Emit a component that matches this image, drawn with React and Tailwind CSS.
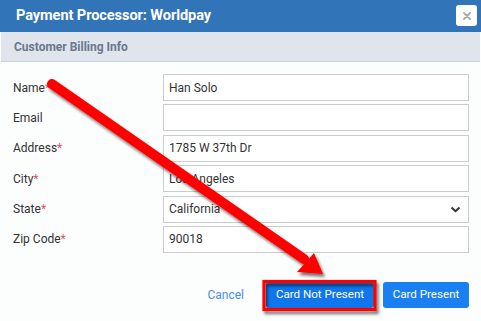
import React from "react";

const rows = [
  { label: "Name", req: true, value: "Han Solo" },
  { label: "Email", req: false, value: "" },
  { label: "Address", req: true, value: "1785 W 37th Dr" },
  { label: "City", req: true, value: "Los Angeles" },
  { label: "State", req: true, value: "California", select: true },
  { label: "Zip Code", req: true, value: "90018" },
];

export default function App() {
  return (
    <div
      className="relative w-[481px] h-[321px] overflow-hidden bg-[#fcfdfd] text-[#333]"
      style={{ fontFamily: "Roboto, 'Liberation Sans', sans-serif" }}
    >
      <div className="h-[32px] bg-[#3174b8] flex items-center justify-between pl-[16px] pr-[4px]">
        <span className="text-white font-bold text-[14.6px] tracking-[-0.1px]">Payment Processor: Worldpay</span>
        <div className="w-[21px] h-[21px] bg-white rounded-[3px] flex items-center justify-center mt-[-1px]">
          <svg width="8" height="8" viewBox="0 0 8 8">
            <path d="M1 1L7 7M7 1L1 7" stroke="#a9a9a9" strokeWidth="1.8" strokeLinecap="round" />
          </svg>
        </div>
      </div>
      <div className="h-[30px] mx-[1px] bg-[#dfe4ed] border-b border-[#cdd3dc] flex items-center pl-[13px]">
        <span className="text-[12px] font-bold text-[#68788f]">Customer Billing Info</span>
      </div>
      <div className="pt-[12px] pl-[13px] pr-[12px] flex flex-col gap-[3.4px]">
        {rows.map((r) => (
          <div key={r.label} className="flex items-center">
            <div className="w-[150px] text-[12px] text-[#333]">
              {r.label}
              {r.req && <span className="text-[#e0525c]">*</span>}
            </div>
            <div className="flex-1 h-[27px] border border-[#cccccc] bg-white flex items-center justify-between pl-[5px] pr-[7px] text-[12px] text-[#333]">
              <span>{r.value}</span>
              {r.select && (
                <svg width="11" height="7" viewBox="0 0 11 7">
                  <path d="M1.5 1.5L5.5 5.2L9.5 1.5" fill="none" stroke="#333" strokeWidth="2" />
                </svg>
              )}
            </div>
          </div>
        ))}
      </div>
      <div className="flex items-center justify-end pr-[12px] mt-[29px] gap-[9px]">
        <span className="text-[12px] text-[#4a8fe0] mr-[13px]">Cancel</span>
        <div className="w-[108px] h-[26px] rounded-[3px] bg-[#0f76ec] text-white text-[11.6px] flex items-center justify-center">
          Card Not Present
        </div>
        <div className="w-[86px] h-[26px] rounded-[3px] bg-[#1a7ff0] text-white text-[11.6px] flex items-center justify-center">
          Card Present
        </div>
      </div>
      <svg className="absolute inset-0 pointer-events-none" width="481" height="321">
        <defs>
          <filter id="sh" x="-20%" y="-20%" width="140%" height="140%">
            <feDropShadow dx="2" dy="3" stdDeviation="1.5" floodColor="#000" floodOpacity="0.55" />
          </filter>
        </defs>
        <g filter="url(#sh)">
          <line x1="52" y1="84" x2="304" y2="259" stroke="#ff0000" strokeWidth="10" strokeLinecap="round" />
          <polygon points="297,272 314,253 323,274" fill="#ff0000" />
          <rect x="264" y="281.5" width="111" height="28" fill="none" stroke="#ff0000" strokeWidth="3.2" />
        </g>
      </svg>
    </div>
  );
}
